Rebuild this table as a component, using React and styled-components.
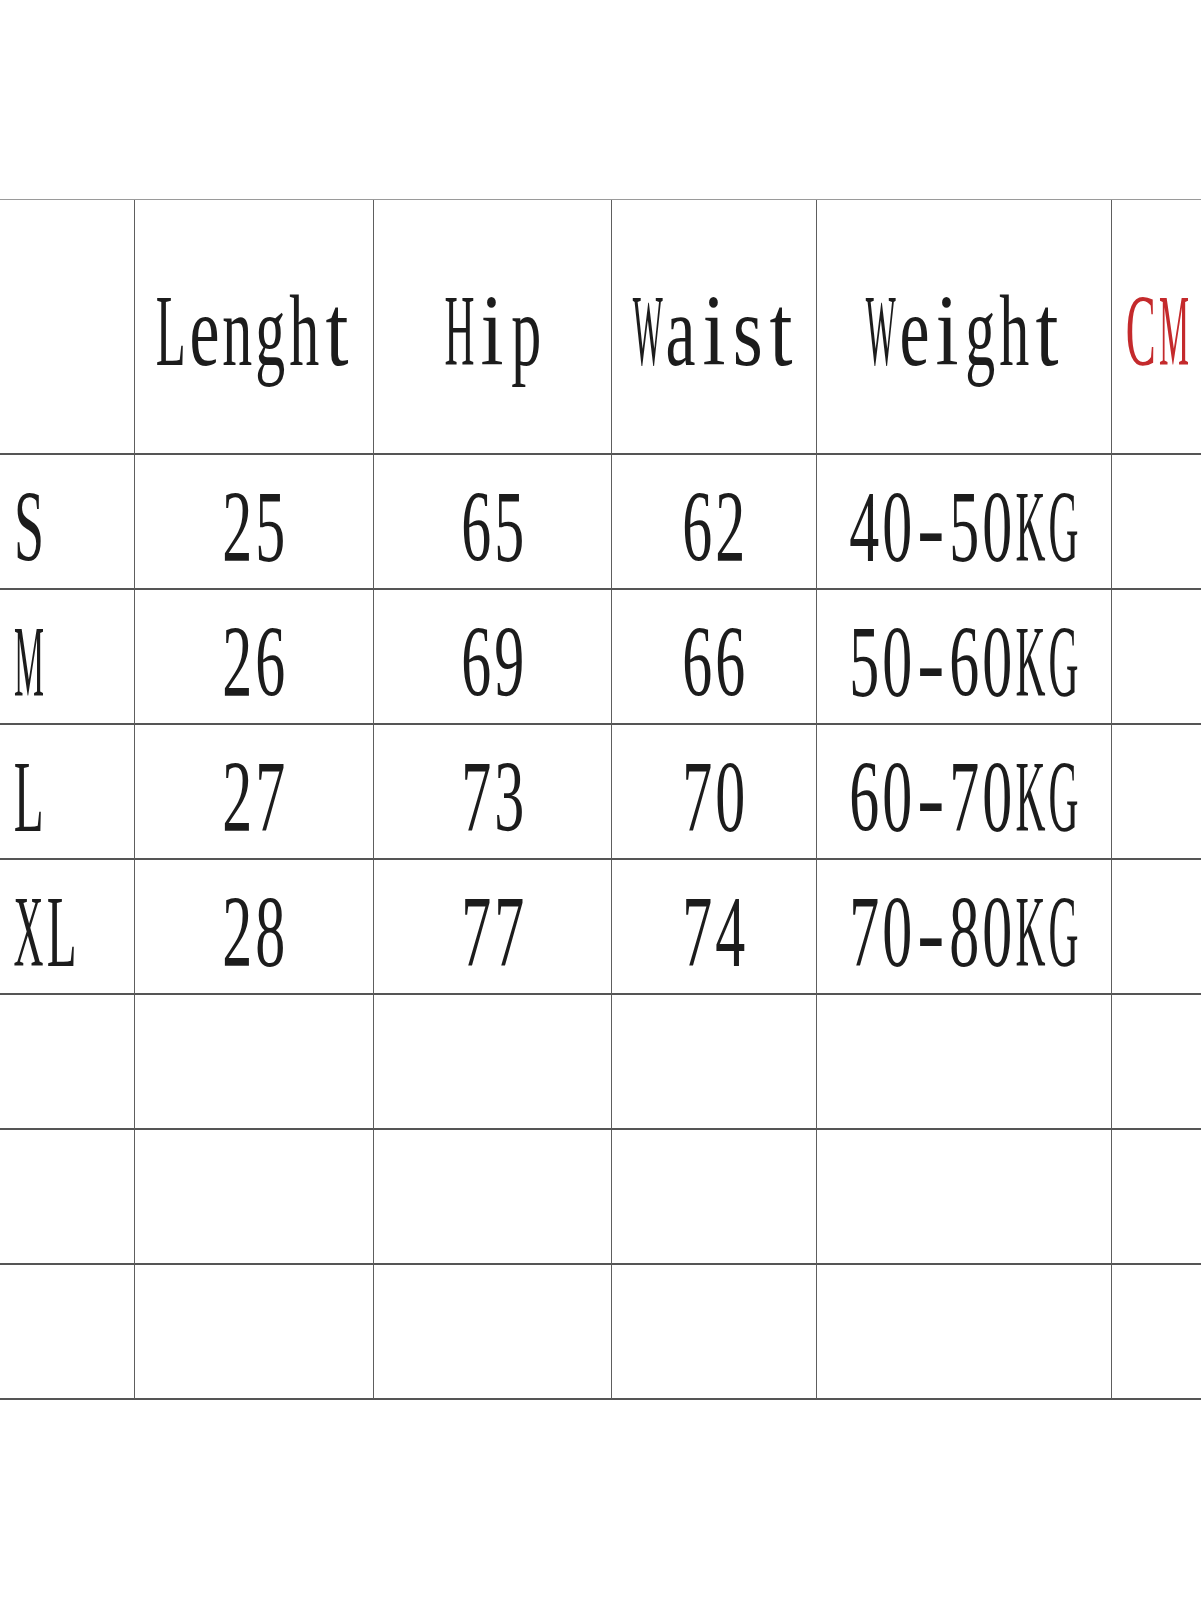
import React from "react";
import styled, { createGlobalStyle } from "styled-components";

const Global = createGlobalStyle`
  html, body { margin: 0; padding: 0; background: #ffffff; }
  #root { width: 1201px; min-height: 1600px; background: #ffffff; }
`;

const Page = styled.div`
  width: 1201px;
  height: 1600px;
  padding-top: 199px;
  box-sizing: border-box;
  overflow: hidden;
  background: #ffffff;
`;

const Grid = styled.div`
  display: grid;
  grid-template-columns: 135px 239px 238px 205px 295px 89px;
  grid-template-rows: 255px repeat(7, 135px);
  border-top: 1px solid #9a9a9a;
`;

const Cell = styled.div`
  box-sizing: border-box;
  border-right: ${(p) => (p.$last ? "none" : "1.5px solid #5e5e5e")};
  border-bottom: 2px solid #555555;
  display: flex;
  align-items: center;
  justify-content: ${(p) => (p.$start ? "flex-start" : "center")};
  padding-left: ${(p) => (p.$start ? "12px" : "0")};
  padding-top: ${(p) => (p.$head ? "10px" : "12px")};
  overflow: visible;
`;

const Word = styled.span`
  display: inline-flex;
  align-items: baseline;
  color: ${(p) => (p.$red ? "#c42a2c" : "#1c1c1c")};
`;

const Slot = styled.span`
  display: inline-flex;
  justify-content: center;
  width: 33.3px;
  overflow: visible;
`;

const Ink = styled.span`
  display: inline-block;
  font-family: "Liberation Serif", "Times New Roman", serif;
  font-size: 101px;
  line-height: 1;
  white-space: nowrap;
  transform: scaleX(${(p) => p.$sx});
  transform-origin: center center;
`;

/* Advance widths (em) of Times-metric glyphs, used to squeeze each glyph into a half-width cell */
const ADV = {
  L: 0.611, e: 0.444, n: 0.5, g: 0.5, h: 0.5, t: 0.278, H: 0.722, i: 0.278,
  p: 0.5, W: 0.944, a: 0.444, s: 0.389, C: 0.667, M: 0.889, S: 0.556,
  X: 0.722, K: 0.722, G: 0.722, "-": 0.333,
};
const glyphScale = (ch) => {
  const adv = (ADV[ch] ?? 0.5) * 101;
  return Math.min(0.82, 30 / adv);
};

function Mono({ text, red }) {
  return (
    <Word $red={red}>
      {text.split("").map((ch, i) => (
        <Slot key={i}>
          <Ink $sx={glyphScale(ch)}>{ch}</Ink>
        </Slot>
      ))}
    </Word>
  );
}

const header = ["", "Lenght", "Hip", "Waist", "Weight"];

const rows = [
  { s: "S", v: ["25", "65", "62"], w: "40-50KG" },
  { s: "M", v: ["26", "69", "66"], w: "50-60KG" },
  { s: "L", v: ["27", "73", "70"], w: "60-70KG" },
  { s: "XL", v: ["28", "77", "74"], w: "70-80KG" },
];

export default function App() {
  return (
    <>
      <Global />
      <Page>
        <Grid>
          {header.map((h, i) => (
            <Cell key={"h" + i} $head>
              {h && <Mono text={h} />}
            </Cell>
          ))}
          <Cell $head $last $start>
            <Mono text="CM" red />
          </Cell>

          {rows.map((r) => (
            <React.Fragment key={r.s}>
              <Cell $start>
                <Mono text={r.s} />
              </Cell>
              {r.v.map((v, j) => (
                <Cell key={j}>
                  <Mono text={v} />
                </Cell>
              ))}
              <Cell>
                <Mono text={r.w} />
              </Cell>
              <Cell $last />
            </React.Fragment>
          ))}

          {[0, 1, 2].map((k) => (
            <React.Fragment key={"e" + k}>
              <Cell />
              <Cell />
              <Cell />
              <Cell />
              <Cell />
              <Cell $last />
            </React.Fragment>
          ))}
        </Grid>
      </Page>
    </>
  );
}
